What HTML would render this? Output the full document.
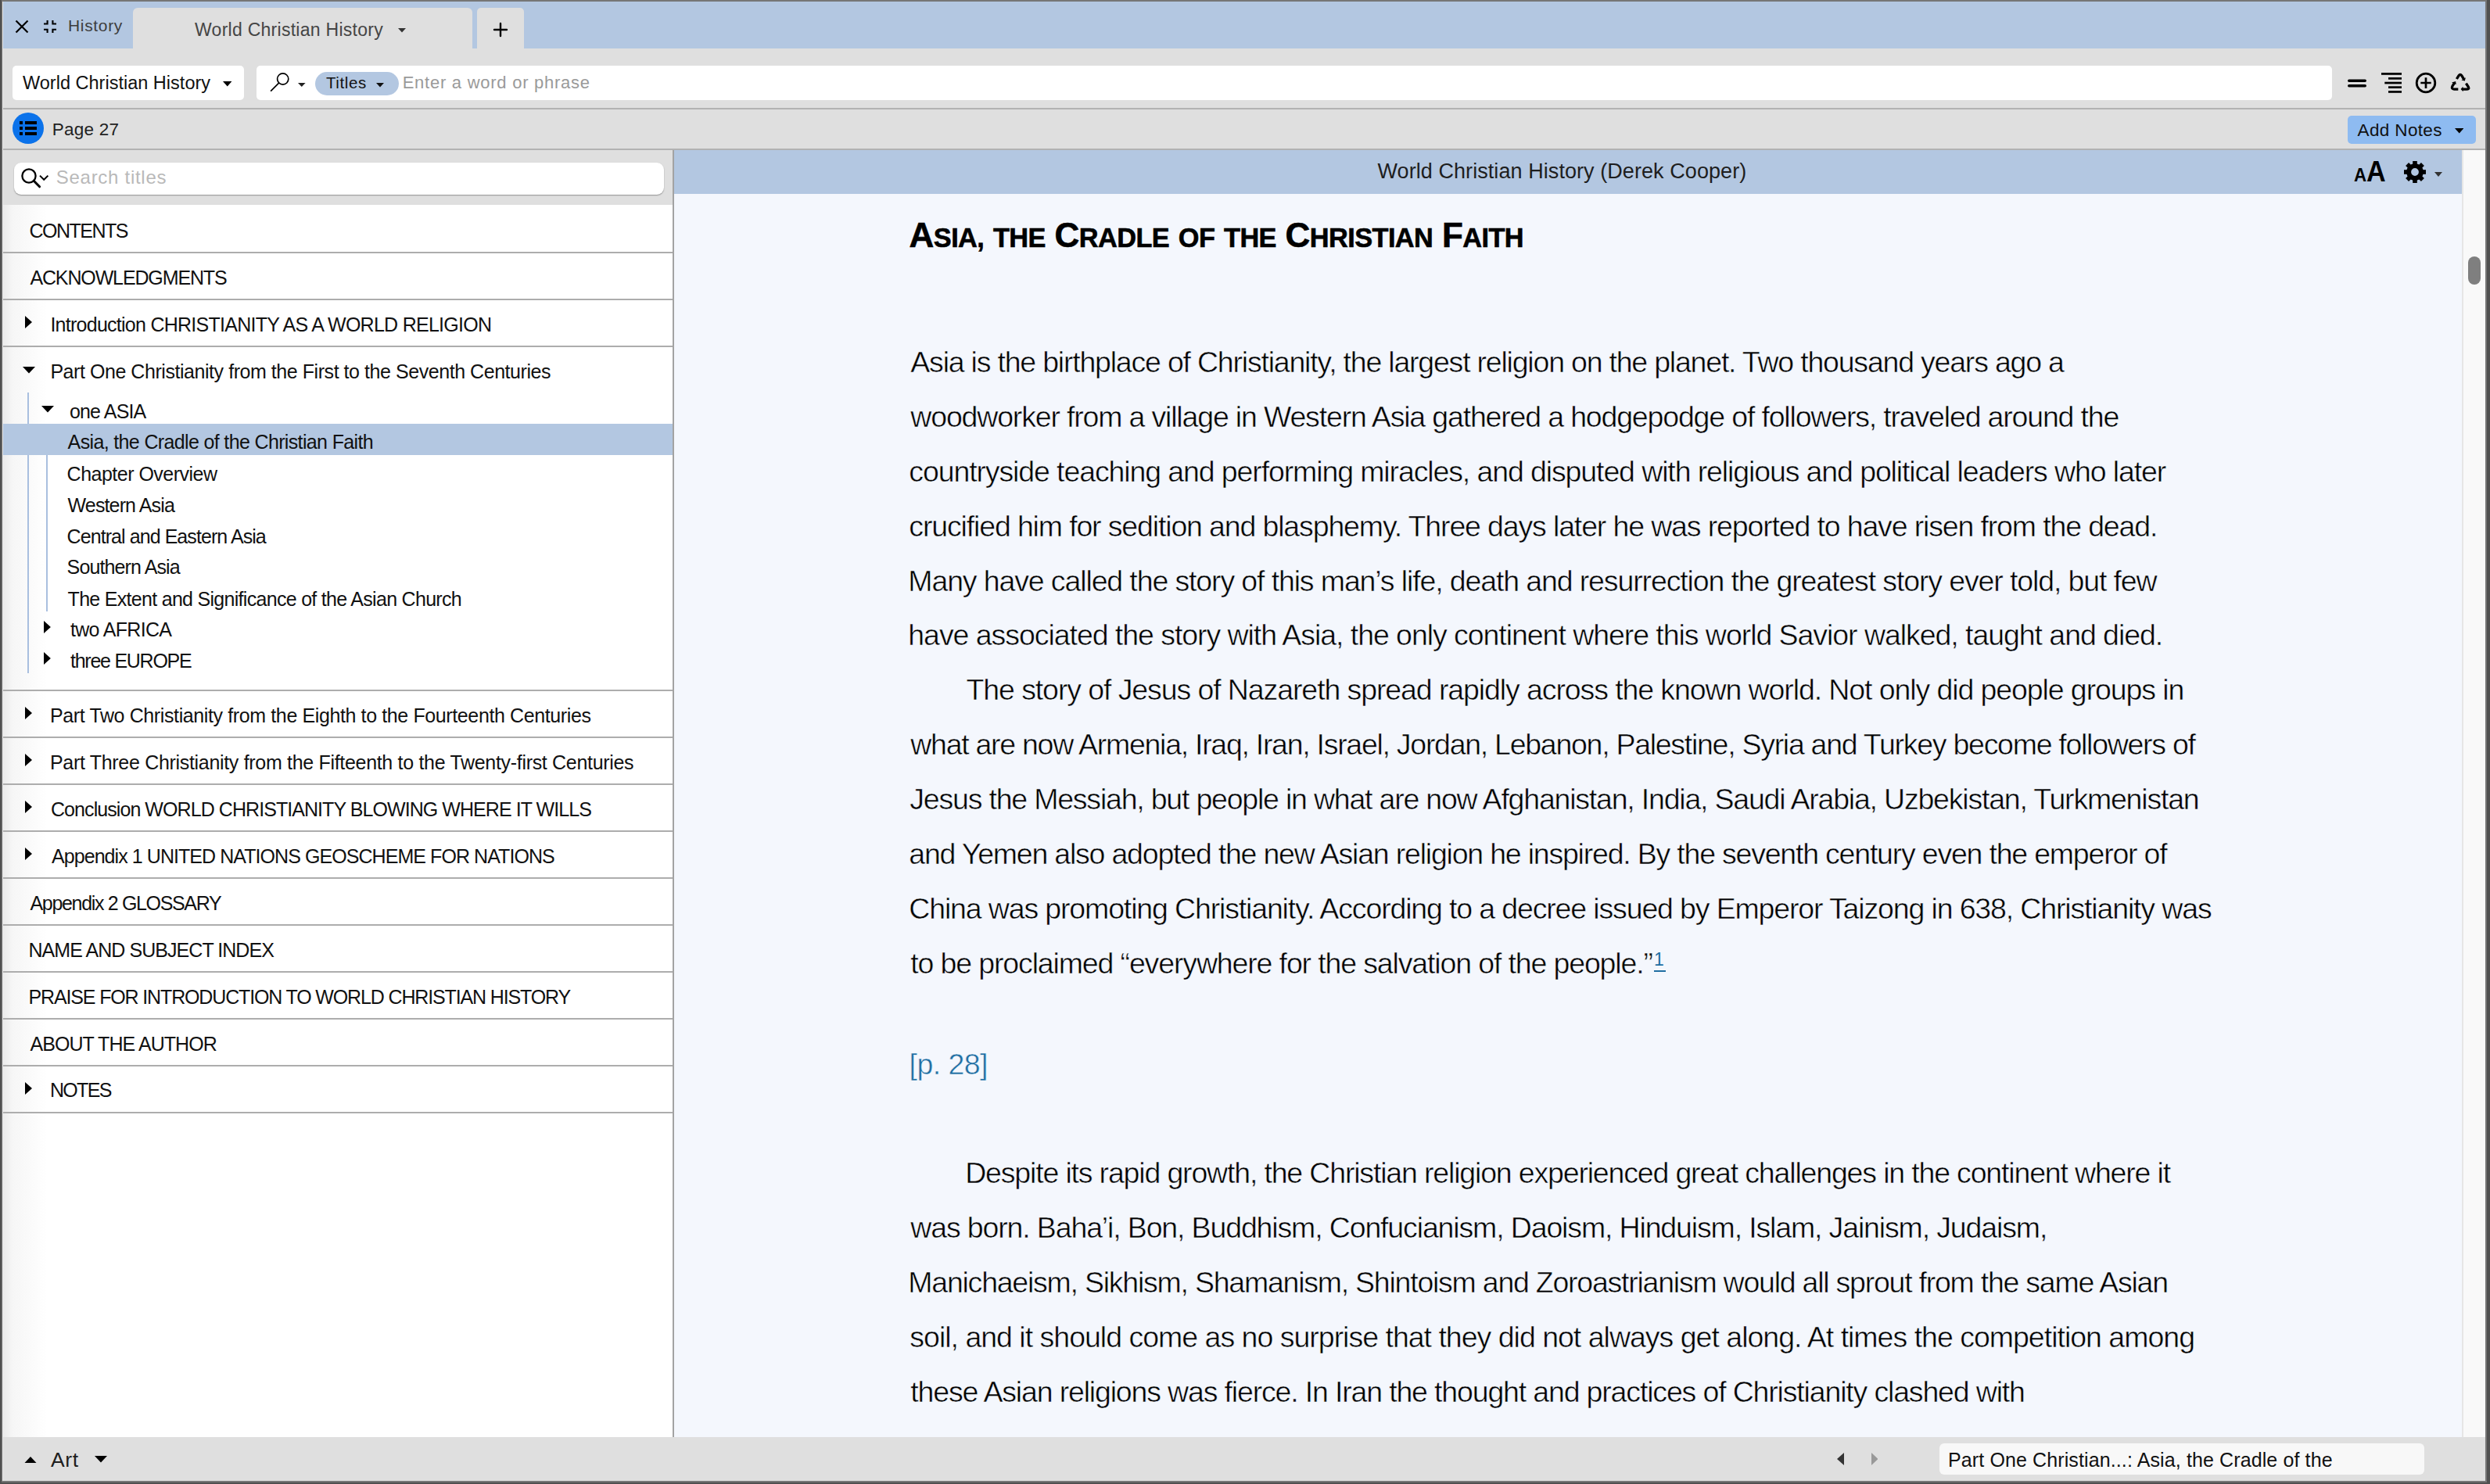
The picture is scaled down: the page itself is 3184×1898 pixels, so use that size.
<!DOCTYPE html>
<html><head><meta charset="utf-8"><title>World Christian History</title>
<style>
html,body{margin:0;padding:0;width:3184px;height:1898px;overflow:hidden;background:#5a5a5a}
body{position:relative;font-family:"Liberation Sans",sans-serif}
.r{position:absolute;display:block}
.t{position:absolute;white-space:pre;font-family:"Liberation Sans",sans-serif}
</style></head><body>
<div class="r" style="left:0px;top:0px;width:3184px;height:1898px;background:#505050;"></div>
<div class="r" style="left:1.5px;top:0px;width:3178.5px;height:1896px;background:#767676;"></div>
<div class="r" style="left:3px;top:2px;width:1px;height:1892px;background:#e2e2e2;"></div>
<div class="r" style="left:4px;top:2px;width:3174px;height:60px;background:#b3c7e1;"></div>
<div class="r" style="left:4px;top:62px;width:3174px;height:130px;background:#dfdfdf;"></div>
<div class="r" style="left:4px;top:138px;width:3174px;height:2px;background:#b2b2b2;"></div>
<div class="r" style="left:4px;top:190px;width:3174px;height:2px;background:#b2b2b2;"></div>
<div class="r" style="left:170px;top:10px;width:434px;height:52px;background:#dfdfdf;border-radius:6px 6px 0 0"></div>
<div class="r" style="left:610px;top:10px;width:60px;height:52px;background:#dfdfdf;border-radius:5px 5px 0 0"></div>
<div class="r" style="left:16px;top:84px;width:296px;height:44px;background:#fff;border-radius:5px"></div>
<div class="r" style="left:328px;top:84px;width:2654px;height:44px;background:#fff;border-radius:5px"></div>
<div class="r" style="left:403px;top:92px;width:107px;height:30px;background:#b3c7e1;border-radius:15px"></div>
<div class="r" style="left:3002px;top:148px;width:164px;height:36px;background:#8ebbf1;border-radius:5px"></div>
<div class="r" style="left:16px;top:144px;width:40px;height:40px;background:#0b72ea;border-radius:50%"></div>
<div class="r" style="left:4px;top:192px;width:856px;height:70px;background:#dfdfdf;"></div>
<div class="r" style="left:4px;top:262px;width:856px;height:1576px;background:#fff;"></div>
<div class="r" style="left:4px;top:262px;width:56px;height:1576px;background:linear-gradient(to right,#ebebeb 0px,#f6f6f6 12px,rgba(255,255,255,0) 56px);"></div>
<div class="r" style="left:17.5px;top:207.5px;width:831px;height:41px;background:#fff;border-radius:9px;box-shadow:0 1px 1.5px rgba(0,0,0,0.35)"></div>
<div class="r" style="left:860px;top:192px;width:2px;height:1646px;background:#a3a3a3;"></div>
<div class="r" style="left:4px;top:322px;width:856px;height:2px;background:#adadad;"></div>
<div class="r" style="left:4px;top:382px;width:856px;height:2px;background:#adadad;"></div>
<div class="r" style="left:4px;top:442px;width:856px;height:2px;background:#adadad;"></div>
<div class="r" style="left:4px;top:882px;width:856px;height:2px;background:#adadad;"></div>
<div class="r" style="left:4px;top:942px;width:856px;height:2px;background:#adadad;"></div>
<div class="r" style="left:4px;top:1002px;width:856px;height:2px;background:#adadad;"></div>
<div class="r" style="left:4px;top:1062px;width:856px;height:2px;background:#adadad;"></div>
<div class="r" style="left:4px;top:1122px;width:856px;height:2px;background:#adadad;"></div>
<div class="r" style="left:4px;top:1182px;width:856px;height:2px;background:#adadad;"></div>
<div class="r" style="left:4px;top:1242px;width:856px;height:2px;background:#adadad;"></div>
<div class="r" style="left:4px;top:1302px;width:856px;height:2px;background:#adadad;"></div>
<div class="r" style="left:4px;top:1362px;width:856px;height:2px;background:#adadad;"></div>
<div class="r" style="left:4px;top:1422px;width:856px;height:2px;background:#adadad;"></div>
<div class="r" style="left:4px;top:542px;width:856px;height:40px;background:#b3c7e1;"></div>
<div class="r" style="left:35px;top:502px;width:2px;height:40px;background:#a9bfdf;"></div>
<div class="r" style="left:35px;top:582px;width:2px;height:279px;background:#a9bfdf;"></div>
<div class="r" style="left:59px;top:582px;width:2px;height:200px;background:#a9bfdf;"></div>
<div class="r" style="left:862px;top:192px;width:2286px;height:56px;background:#b3c7e1;"></div>
<div class="r" style="left:862px;top:248px;width:2286px;height:1590px;background:#f4f7fd;"></div>
<div class="r" style="left:3148px;top:192px;width:30px;height:1646px;background:#f9f9f9;"></div>
<div class="r" style="left:3148px;top:192px;width:2px;height:1646px;background:#e6e6e6;"></div>
<div class="r" style="left:3156px;top:328px;width:16px;height:36px;background:#7f7f7f;border-radius:8px"></div>
<div class="r" style="left:4px;top:1838px;width:3174px;height:56px;background:#dfdfdf;"></div>
<div class="r" style="left:2480px;top:1846px;width:620px;height:40px;background:#f8f8f8;border-radius:6px"></div>
<svg class="r" style="left:32px;top:404px" width="9" height="16"><polygon points="0,0 9,8 0,16" fill="#000"/></svg>
<svg class="r" style="left:32px;top:904px" width="9" height="16"><polygon points="0,0 9,8 0,16" fill="#000"/></svg>
<svg class="r" style="left:32px;top:964px" width="9" height="16"><polygon points="0,0 9,8 0,16" fill="#000"/></svg>
<svg class="r" style="left:32px;top:1024px" width="9" height="16"><polygon points="0,0 9,8 0,16" fill="#000"/></svg>
<svg class="r" style="left:32px;top:1084px" width="9" height="16"><polygon points="0,0 9,8 0,16" fill="#000"/></svg>
<svg class="r" style="left:32px;top:1384px" width="9" height="16"><polygon points="0,0 9,8 0,16" fill="#000"/></svg>
<svg class="r" style="left:56.3px;top:794.2px" width="8.9" height="16"><polygon points="0,0 8.9,8 0,16" fill="#000"/></svg>
<svg class="r" style="left:56.3px;top:834.2px" width="8.9" height="16"><polygon points="0,0 8.9,8 0,16" fill="#000"/></svg>
<svg class="r" style="left:28.5px;top:469px" width="16" height="8.5"><polygon points="0,0 16,0 8,8.5" fill="#000"/></svg>
<svg class="r" style="left:52.5px;top:519px" width="16" height="8.5"><polygon points="0,0 16,0 8,8.5" fill="#000"/></svg>
<svg class="r" style="left:284.5px;top:104px" width="11.5" height="6.5"><polygon points="0,0 11.5,0 5.75,6.5" fill="#000"/></svg>
<svg class="r" style="left:509px;top:36px" width="10" height="5.5"><polygon points="0,0 10,0 5,5.5" fill="#333"/></svg>
<svg class="r" style="left:381.4px;top:106px" width="9.6" height="5"><polygon points="0,0 9.6,0 4.8,5" fill="#222"/></svg>
<svg class="r" style="left:481px;top:106px" width="10" height="5.5"><polygon points="0,0 10,0 5,5.5" fill="#111"/></svg>
<svg class="r" style="left:3138.5px;top:164px" width="11.5" height="6.5"><polygon points="0,0 11.5,0 5.75,6.5" fill="#000"/></svg>
<svg class="r" style="left:3113px;top:220px" width="10" height="6"><polygon points="0,0 10,0 5,6" fill="#333"/></svg>
<svg class="r" style="left:30.5px;top:1862.5px" width="16" height="8.5"><polygon points="0,8.5 16,8.5 8,0" fill="#000"/></svg>
<svg class="r" style="left:120.5px;top:1862px" width="16" height="8.5"><polygon points="0,0 16,0 8,8.5" fill="#000"/></svg>
<svg class="r" style="left:2349px;top:1858px" width="9" height="16"><polygon points="9,0 0,8 9,16" fill="#333"/></svg>
<svg class="r" style="left:2392.5px;top:1858px" width="8.5" height="16"><polygon points="0,0 8.5,8 0,16" fill="#999"/></svg>

<svg class="r" style="left:18px;top:24px" width="20" height="20" viewBox="0 0 20 20"><path d="M2.5 2.5 L17.5 17.5 M17.5 2.5 L2.5 17.5" stroke="#000" stroke-width="2.2" fill="none"/></svg>
<svg class="r" style="left:50px;top:20px" width="28" height="28" viewBox="0 0 28 28"><path d="M6 10.45 H10.6 V6 M22 10.45 H17.4 V6 M6 17.8 H10.6 V22 M22 17.8 H17.4 V22" stroke="#000" stroke-width="2.1" fill="none"/></svg>
<svg class="r" style="left:628px;top:26px" width="24" height="24" viewBox="0 0 24 24"><path d="M4 12 H20 M12 4 V20" stroke="#000" stroke-width="2.4" stroke-linecap="round" fill="none"/></svg>
<svg class="r" style="left:343px;top:91px" width="30" height="30" viewBox="0 0 30 30"><circle cx="18.7" cy="10" r="7.1" stroke="#000" stroke-width="1.7" fill="none"/><path d="M13.6 15.2 L3.6 25.2" stroke="#000" stroke-width="1.7" stroke-linecap="round"/></svg>
<svg class="r" style="left:24px;top:213px" width="42" height="30" viewBox="0 0 42 30"><circle cx="13" cy="12" r="8.6" stroke="#000" stroke-width="2.3" fill="none"/><path d="M19.2 18.2 L26.6 25.8" stroke="#000" stroke-width="3" stroke-linecap="round"/><path d="M27 11.6 L32.2 16.8 L37.4 11.6" stroke="#000" stroke-width="2" fill="none"/></svg>
<svg class="r" style="left:25px;top:155px" width="23" height="19" viewBox="0 0 23 19"><rect x="0" y="0" width="4" height="4"/><rect x="7" y="0" width="15" height="4"/><rect x="0" y="7" width="4" height="4"/><rect x="7" y="7" width="15" height="4"/><rect x="0" y="14" width="4" height="4"/><rect x="7" y="14" width="15" height="4"/></svg>
<svg class="r" style="left:3000px;top:99px" width="28" height="15" viewBox="0 0 28 15"><path d="M3.8 4.3 H24.2 M3.8 10.8 H24.2" stroke="#000" stroke-width="3.6" stroke-linecap="round"/></svg>
<svg class="r" style="left:3045px;top:93px" width="26" height="26" viewBox="0 0 26 26"><rect x="0" y="0" width="26" height="2.8"/><rect x="9" y="6" width="17" height="2.7"/><rect x="4.3" y="11.7" width="21.7" height="2.7"/><rect x="9" y="17.3" width="17" height="2.7"/><rect x="9" y="23.1" width="17" height="2.7"/></svg>
<svg class="r" style="left:3087px;top:91px" width="30" height="30" viewBox="0 0 30 30"><circle cx="15" cy="15" r="11.8" stroke="#000" stroke-width="2.8" fill="none"/><path d="M8.3 15 H21.7 M15 8.2 V22" stroke="#000" stroke-width="2.7"/></svg>
<svg class="r" style="left:3128px;top:90px" width="36" height="32" viewBox="0 0 36 32"><path d="M13.4 11 L16.1 6.6 Q17.9 4 19.8 6.6 L22.6 11.3" stroke="#000" stroke-width="3.3" fill="none"/><polygon points="24.9,9.3 23.8,13.6 19.4,12.5"/><path d="M15.3 24.1 H10.2 Q6.2 23.8 7.9 20.2 L10.6 15.8" stroke="#000" stroke-width="3.3" fill="none"/><polygon points="7.0,15.6 12.1,13.9 12.7,18.1"/><path d="M25.4 16.6 L28.3 21.1 Q29.9 24.1 25.8 24.1 L20.8 24.1" stroke="#000" stroke-width="3.3" fill="none"/><polygon points="21.4,20.8 18.6,24.0 21.6,27.3"/></svg>
<svg class="r" style="left:3072px;top:204px" width="32" height="32" viewBox="0 0 32 32"><g transform="translate(16 16)"><path fill-rule="evenodd" d="M0 -10.8 A10.8 10.8 0 1 1 0 10.8 A10.8 10.8 0 1 1 0 -10.8 Z M0 -4.9 A4.9 4.9 0 1 0 0 4.9 A4.9 4.9 0 1 0 0 -4.9 Z"/><rect x="-2.8" y="-14" width="5.6" height="6" transform="rotate(0)"/><rect x="-2.8" y="-14" width="5.6" height="6" transform="rotate(45)"/><rect x="-2.8" y="-14" width="5.6" height="6" transform="rotate(90)"/><rect x="-2.8" y="-14" width="5.6" height="6" transform="rotate(135)"/><rect x="-2.8" y="-14" width="5.6" height="6" transform="rotate(180)"/><rect x="-2.8" y="-14" width="5.6" height="6" transform="rotate(225)"/><rect x="-2.8" y="-14" width="5.6" height="6" transform="rotate(270)"/><rect x="-2.8" y="-14" width="5.6" height="6" transform="rotate(315)"/></g></svg>

<div class="t" style="left:3009.5px;top:212.261px;font-size:24.5px;line-height:24.5px;color:#000;font-weight:700;transform:scaleX(0.91);transform-origin:0 0">A</div><div class="t" style="left:3026px;top:201.256px;font-size:37.5px;line-height:37.5px;color:#000;font-weight:700;transform:scaleX(0.91);transform-origin:0 0">A</div>
<div class="r" style="left:2115px;top:1241px;width:15px;height:2px;background:#1f6ea2;"></div>
<div class="t" style="left:87.00px;top:22.22px;font-size:21.00px;line-height:21.00px;color:#3d3d3d;font-weight:400;letter-spacing:0.667px;">History</div>
<div class="t" style="left:249.00px;top:26.53px;font-size:23.00px;line-height:23.00px;color:#454545;font-weight:400;letter-spacing:0.273px;">World Christian History</div>
<div class="t" style="left:29.00px;top:94.51px;font-size:23.50px;line-height:23.50px;color:#111;font-weight:400;letter-spacing:0.009px;">World Christian History</div>
<div class="t" style="left:417.00px;top:96.45px;font-size:20.50px;line-height:20.50px;color:#111;font-weight:400;letter-spacing:0.600px;">Titles</div>
<div class="t" style="left:514.70px;top:95.18px;font-size:22.00px;line-height:22.00px;color:#9a9a9a;font-weight:400;letter-spacing:0.743px;">Enter a word or phrase</div>
<div class="t" style="left:66.70px;top:155.25px;font-size:22.50px;line-height:22.50px;color:#222;font-weight:400;letter-spacing:0.267px;">Page 27</div>
<div class="t" style="left:3014.60px;top:155.75px;font-size:22.50px;line-height:22.50px;color:#111;font-weight:400;letter-spacing:0.350px;">Add Notes</div>
<div class="t" style="left:71.80px;top:215.48px;font-size:24.00px;line-height:24.00px;color:#b9b9b9;font-weight:400;letter-spacing:0.717px;">Search titles</div>
<div class="t" style="left:37.40px;top:283.34px;font-size:25.00px;line-height:25.00px;color:#111;font-weight:400;letter-spacing:-1.486px;">CONTENTS</div>
<div class="t" style="left:38.40px;top:343.44px;font-size:25.00px;line-height:25.00px;color:#111;font-weight:400;letter-spacing:-1.129px;">ACKNOWLEDGMENTS</div>
<div class="t" style="left:64.40px;top:402.84px;font-size:25.00px;line-height:25.00px;color:#111;font-weight:400;letter-spacing:-0.736px;">Introduction CHRISTIANITY AS A WORLD RELIGION</div>
<div class="t" style="left:64.40px;top:462.64px;font-size:25.00px;line-height:25.00px;color:#111;font-weight:400;letter-spacing:-0.447px;">Part One Christianity from the First to the Seventh Centuries</div>
<div class="t" style="left:89.00px;top:513.94px;font-size:25.00px;line-height:25.00px;color:#111;font-weight:400;letter-spacing:-0.857px;">one ASIA</div>
<div class="t" style="left:86.60px;top:553.44px;font-size:25.00px;line-height:25.00px;color:#111;font-weight:400;letter-spacing:-0.642px;">Asia, the Cradle of the Christian Faith</div>
<div class="t" style="left:85.60px;top:593.54px;font-size:25.00px;line-height:25.00px;color:#111;font-weight:400;letter-spacing:-0.507px;">Chapter Overview</div>
<div class="t" style="left:86.60px;top:633.64px;font-size:25.00px;line-height:25.00px;color:#111;font-weight:400;letter-spacing:-0.873px;">Western Asia</div>
<div class="t" style="left:85.60px;top:673.94px;font-size:25.00px;line-height:25.00px;color:#111;font-weight:400;letter-spacing:-0.930px;">Central and Eastern Asia</div>
<div class="t" style="left:85.60px;top:713.34px;font-size:25.00px;line-height:25.00px;color:#111;font-weight:400;letter-spacing:-0.883px;">Southern Asia</div>
<div class="t" style="left:86.60px;top:753.64px;font-size:25.00px;line-height:25.00px;color:#111;font-weight:400;letter-spacing:-0.704px;">The Extent and Significance of the Asian Church</div>
<div class="t" style="left:90.00px;top:793.04px;font-size:25.00px;line-height:25.00px;color:#111;font-weight:400;letter-spacing:-0.689px;">two AFRICA</div>
<div class="t" style="left:90.00px;top:832.84px;font-size:25.00px;line-height:25.00px;color:#111;font-weight:400;letter-spacing:-1.255px;">three EUROPE</div>
<div class="t" style="left:64.00px;top:903.04px;font-size:25.00px;line-height:25.00px;color:#111;font-weight:400;letter-spacing:-0.384px;">Part Two Christianity from the Eighth to the Fourteenth Centuries</div>
<div class="t" style="left:64.00px;top:962.64px;font-size:25.00px;line-height:25.00px;color:#111;font-weight:400;letter-spacing:-0.313px;">Part Three Christianity from the Fifteenth to the Twenty-first Centuries</div>
<div class="t" style="left:65.00px;top:1022.64px;font-size:25.00px;line-height:25.00px;color:#111;font-weight:400;letter-spacing:-0.933px;">Conclusion WORLD CHRISTIANITY BLOWING WHERE IT WILLS</div>
<div class="t" style="left:66.00px;top:1082.64px;font-size:25.00px;line-height:25.00px;color:#111;font-weight:400;letter-spacing:-0.935px;">Appendix 1 UNITED NATIONS GEOSCHEME FOR NATIONS</div>
<div class="t" style="left:38.50px;top:1142.64px;font-size:25.00px;line-height:25.00px;color:#111;font-weight:400;letter-spacing:-1.333px;">Appendix 2 GLOSSARY</div>
<div class="t" style="left:36.50px;top:1202.64px;font-size:25.00px;line-height:25.00px;color:#111;font-weight:400;letter-spacing:-0.952px;">NAME AND SUBJECT INDEX</div>
<div class="t" style="left:36.50px;top:1262.64px;font-size:25.00px;line-height:25.00px;color:#111;font-weight:400;letter-spacing:-1.143px;">PRAISE FOR INTRODUCTION TO WORLD CHRISTIAN HISTORY</div>
<div class="t" style="left:38.50px;top:1322.64px;font-size:25.00px;line-height:25.00px;color:#111;font-weight:400;letter-spacing:-0.933px;">ABOUT THE AUTHOR</div>
<div class="t" style="left:64.00px;top:1382.24px;font-size:25.00px;line-height:25.00px;color:#111;font-weight:400;letter-spacing:-1.700px;">NOTES</div>
<div class="t" style="left:1761.50px;top:206.04px;font-size:27.00px;line-height:27.00px;color:#1e1e1e;font-weight:400;letter-spacing:0.070px;">World Christian History (Derek Cooper)</div>
<div class="t" style="left:1162.60px;top:279.35px;font-size:44.00px;line-height:44.00px;color:#000;font-weight:700;letter-spacing:-0.568px;-webkit-text-stroke:0.6px #000"><span>A</span><span style="font-size:78%">SIA,</span> <span style="font-size:78%">THE</span> <span>C</span><span style="font-size:78%">RADLE</span> <span style="font-size:78%">OF</span> <span style="font-size:78%">THE</span> <span>C</span><span style="font-size:78%">HRISTIAN</span> <span>F</span><span style="font-size:78%">AITH</span></div>
<div class="t" style="left:1164.30px;top:445.06px;font-size:37.50px;line-height:37.50px;color:#000;font-weight:400;letter-spacing:-1.210px;-webkit-text-stroke:0.5px #f4f7fd">Asia is the birthplace of Christianity, the largest religion on the planet. Two thousand years ago a</div>
<div class="t" style="left:1164.30px;top:515.26px;font-size:37.50px;line-height:37.50px;color:#000;font-weight:400;letter-spacing:-1.173px;-webkit-text-stroke:0.5px #f4f7fd">woodworker from a village in Western Asia gathered a hodgepodge of followers, traveled around the</div>
<div class="t" style="left:1162.30px;top:585.06px;font-size:37.50px;line-height:37.50px;color:#000;font-weight:400;letter-spacing:-1.115px;-webkit-text-stroke:0.5px #f4f7fd">countryside teaching and performing miracles, and disputed with religious and political leaders who later</div>
<div class="t" style="left:1162.30px;top:654.86px;font-size:37.50px;line-height:37.50px;color:#000;font-weight:400;letter-spacing:-1.147px;-webkit-text-stroke:0.5px #f4f7fd">crucified him for sedition and blasphemy. Three days later he was reported to have risen from the dead.</div>
<div class="t" style="left:1161.30px;top:724.66px;font-size:37.50px;line-height:37.50px;color:#000;font-weight:400;letter-spacing:-1.128px;-webkit-text-stroke:0.5px #f4f7fd">Many have called the story of this man’s life, death and resurrection the greatest story ever told, but few</div>
<div class="t" style="left:1161.30px;top:794.46px;font-size:37.50px;line-height:37.50px;color:#000;font-weight:400;letter-spacing:-1.054px;-webkit-text-stroke:0.5px #f4f7fd">have associated the story with Asia, the only continent where this world Savior walked, taught and died.</div>
<div class="t" style="left:1235.50px;top:864.26px;font-size:37.50px;line-height:37.50px;color:#000;font-weight:400;letter-spacing:-1.098px;-webkit-text-stroke:0.5px #f4f7fd">The story of Jesus of Nazareth spread rapidly across the known world. Not only did people groups in</div>
<div class="t" style="left:1164.30px;top:934.16px;font-size:37.50px;line-height:37.50px;color:#000;font-weight:400;letter-spacing:-1.280px;-webkit-text-stroke:0.5px #f4f7fd">what are now Armenia, Iraq, Iran, Israel, Jordan, Lebanon, Palestine, Syria and Turkey become followers of</div>
<div class="t" style="left:1163.30px;top:1004.16px;font-size:37.50px;line-height:37.50px;color:#000;font-weight:400;letter-spacing:-1.210px;-webkit-text-stroke:0.5px #f4f7fd">Jesus the Messiah, but people in what are now Afghanistan, India, Saudi Arabia, Uzbekistan, Turkmenistan</div>
<div class="t" style="left:1162.30px;top:1074.16px;font-size:37.50px;line-height:37.50px;color:#000;font-weight:400;letter-spacing:-1.210px;-webkit-text-stroke:0.5px #f4f7fd">and Yemen also adopted the new Asian religion he inspired. By the seventh century even the emperor of</div>
<div class="t" style="left:1162.30px;top:1144.06px;font-size:37.50px;line-height:37.50px;color:#000;font-weight:400;letter-spacing:-1.149px;-webkit-text-stroke:0.5px #f4f7fd">China was promoting Christianity. According to a decree issued by Emperor Taizong in 638, Christianity was</div>
<div class="t" style="left:1164.30px;top:1213.86px;font-size:37.50px;line-height:37.50px;color:#000;font-weight:400;letter-spacing:-1.141px;-webkit-text-stroke:0.5px #f4f7fd">to be proclaimed “everywhere for the salvation of the people.”</div>
<div class="t" style="left:1234.20px;top:1482.06px;font-size:37.50px;line-height:37.50px;color:#000;font-weight:400;letter-spacing:-1.171px;-webkit-text-stroke:0.5px #f4f7fd">Despite its rapid growth, the Christian religion experienced great challenges in the continent where it</div>
<div class="t" style="left:1164.30px;top:1552.06px;font-size:37.50px;line-height:37.50px;color:#000;font-weight:400;letter-spacing:-1.145px;-webkit-text-stroke:0.5px #f4f7fd">was born. Baha’i, Bon, Buddhism, Confucianism, Daoism, Hinduism, Islam, Jainism, Judaism,</div>
<div class="t" style="left:1161.30px;top:1622.26px;font-size:37.50px;line-height:37.50px;color:#000;font-weight:400;letter-spacing:-1.239px;-webkit-text-stroke:0.5px #f4f7fd">Manichaeism, Sikhism, Shamanism, Shintoism and Zoroastrianism would all sprout from the same Asian</div>
<div class="t" style="left:1163.30px;top:1692.36px;font-size:37.50px;line-height:37.50px;color:#000;font-weight:400;letter-spacing:-1.002px;-webkit-text-stroke:0.5px #f4f7fd">soil, and it should come as no surprise that they did not always get along. At times the competition among</div>
<div class="t" style="left:1164.30px;top:1762.36px;font-size:37.50px;line-height:37.50px;color:#000;font-weight:400;letter-spacing:-1.164px;-webkit-text-stroke:0.5px #f4f7fd">these Asian religions was fierce. In Iran the thought and practices of Christianity clashed with</div>
<div class="t" style="left:1162.60px;top:1342.56px;font-size:37.50px;line-height:37.50px;color:#1f6ea2;font-weight:400;letter-spacing:-0.567px;-webkit-text-stroke:0.5px #f4f7fd">[p. 28]</div>
<div class="t" style="left:2115.00px;top:1216.33px;font-size:23.00px;line-height:23.00px;color:#1f6ea2;font-weight:400;letter-spacing:0.000px;">1</div>
<div class="t" style="left:65.00px;top:1853.57px;font-size:26.50px;line-height:26.50px;color:#1e1e1e;font-weight:400;letter-spacing:0.600px;">Art</div>
<div class="t" style="left:2491.00px;top:1855.04px;font-size:25.00px;line-height:25.00px;color:#111;font-weight:400;letter-spacing:0.116px;">Part One Christian...: Asia, the Cradle of the</div>
</body></html>
